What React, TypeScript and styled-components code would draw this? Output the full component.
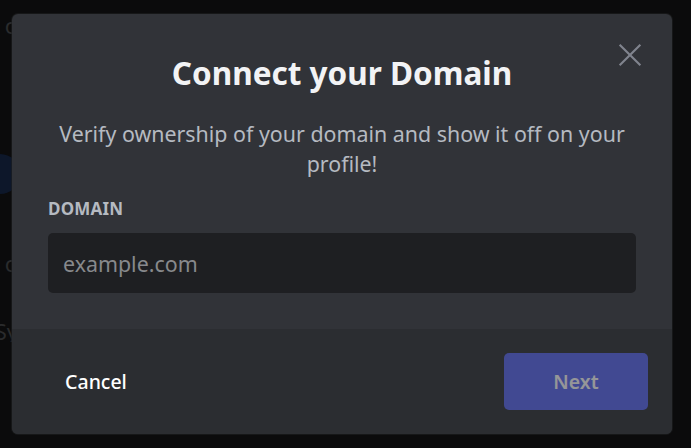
import React from 'react';
import styled, { createGlobalStyle } from 'styled-components';

const GlobalStyle = createGlobalStyle`
  html, body {
    margin: 0;
    padding: 0;
    background: #0b0b0c;
    width: 691px;
    height: 448px;
    overflow: hidden;
    font-family: 'Noto Sans', 'Open Sans', sans-serif;
  }
`;

const Backdrop = styled.div`
  position: relative;
  width: 691px;
  height: 448px;
  background: #0b0b0c;
  overflow: hidden;
`;

// page content dimmed behind the modal, only its edge shows
const PageGhost = styled.div`
  display: flex;
  flex-direction: column;
  align-items: flex-end;
  width: 18px;
  padding-top: 14px;
  color: #2a2b2d;
  font-size: 22px;
  line-height: 22px;
  overflow: hidden;
`;

const GhostText = styled.div<{ $gap: number }>`
  margin-top: ${({ $gap }) => $gap}px;
  white-space: nowrap;
`;

const GhostAvatar = styled.div`
  margin-top: 118px;
  margin-right: -2px;
  width: 40px;
  height: 40px;
  border-radius: 50%;
  background: #0d172a;
  flex-shrink: 0;
`;

const Modal = styled.div`
  position: absolute;
  left: 12px;
  top: 14px;
  width: 660px;
  height: 420px;
  display: flex;
  flex-direction: column;
  background: #313338;
  border-radius: 6px;
  overflow: hidden;
  box-shadow: 0 0 0 1px rgba(30, 31, 34, 0.6);
`;

const Header = styled.div`
  position: relative;
  padding: 36px 24px 0;
  text-align: center;
`;

const Title = styled.h1`
  margin: 0;
  color: #f2f3f5;
  font-size: 31.5px;
  line-height: 45px;
  font-weight: 700;
`;

const CloseButton = styled.button`
  position: absolute;
  top: 23px;
  right: 24px;
  width: 36px;
  height: 36px;
  padding: 0;
  border: none;
  background: none;
  color: #80848e;
  display: flex;
  align-items: center;
  justify-content: center;
  cursor: pointer;
`;

const Description = styled.p`
  margin: 24px 24px 0;
  color: #b5bac1;
  font-size: 21.4px;
  line-height: 30px;
  text-align: center;
`;

const Body = styled.div`
  flex: 1;
  padding: 18px 36px 0;
`;

const Label = styled.label`
  display: block;
  color: #b5bac1;
  font-size: 17px;
  line-height: 24px;
  font-weight: 700;
  letter-spacing: 0.2px;
  text-transform: uppercase;
`;

const Input = styled.input`
  box-sizing: border-box;
  display: block;
  width: 100%;
  height: 60px;
  margin-top: 12px;
  padding: 0 15px;
  border: none;
  border-radius: 5px;
  background: #1e1f22;
  color: #dbdee1;
  font-family: inherit;
  font-size: 21.4px;
  outline: none;

  &::placeholder {
    color: #87898c;
  }
`;

const Footer = styled.div`
  display: flex;
  align-items: center;
  justify-content: space-between;
  height: 105px;
  box-sizing: border-box;
  padding: 24px;
  background: #2b2d31;
`;

const Button = styled.button<{ $variant: 'link' | 'primary' }>`
  width: ${({ $variant }) => ($variant === 'primary' ? 144 : 120)}px;
  height: 57px;
  border: none;
  border-radius: 5px;
  font-family: inherit;
  font-size: 19.5px;
  font-weight: ${({ $variant }) => ($variant === 'primary' ? 600 : 500)};
  cursor: pointer;
  color: #ffffff;
  background: ${({ $variant }) => ($variant === 'primary' ? '#5865f2' : 'transparent')};
  opacity: ${({ $variant }) => ($variant === 'primary' ? 0.5 : 1)};
`;

export default function App() {
  return (
    <>
      <GlobalStyle />
      <Backdrop>
        <PageGhost>
          <GhostText $gap={0}>o</GhostText>
          <GhostAvatar />
          <GhostText $gap={58}>o</GhostText>
          <GhostText $gap={46}>Sy</GhostText>
        </PageGhost>
        <Modal>
          <Header>
            <Title>Connect your Domain</Title>
            <CloseButton aria-label="Close">
              <svg width="36" height="36" viewBox="0 0 24 24" fill="none">
                <path
                  d="M5.6 4.6 12 11l6.4-6.4 1 1L13 12l6.4 6.4-1 1L12 13l-6.4 6.4-1-1L11 12 4.6 5.6z"
                  fill="currentColor"
                />
              </svg>
            </CloseButton>
          </Header>
          <Description>Verify ownership of your domain and show it off on your profile!</Description>
          <Body>
            <Label>Domain</Label>
            <Input placeholder="example.com" />
          </Body>
          <Footer>
            <Button $variant="link">Cancel</Button>
            <Button $variant="primary" disabled>
              Next
            </Button>
          </Footer>
        </Modal>
      </Backdrop>
    </>
  );
}
